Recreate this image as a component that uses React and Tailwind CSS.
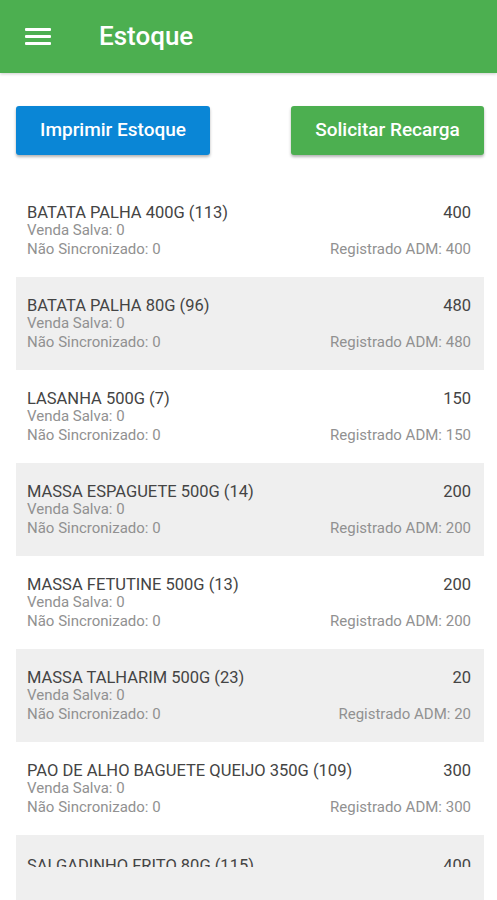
import React from 'react';

const items = [
    { name: 'BATATA PALHA 400G (113)', qty: 400, adm: 400 },
    { name: 'BATATA PALHA 80G (96)', qty: 480, adm: 480 },
    { name: 'LASANHA 500G (7)', qty: 150, adm: 150 },
    { name: 'MASSA ESPAGUETE 500G (14)', qty: 200, adm: 200 },
    { name: 'MASSA FETUTINE 500G (13)', qty: 200, adm: 200 },
    { name: 'MASSA TALHARIM 500G (23)', qty: 20, adm: 20 },
    { name: 'PAO DE ALHO BAGUETE QUEIJO 350G (109)', qty: 300, adm: 300 },
];

function StockRow({ item, shaded }) {
    return (
        <div className={`h-[93px] pl-[11px] pr-[13px] pt-[19px] ${shaded ? 'bg-[#efefef]' : 'bg-white'}`}>
            <div className="flex justify-between text-[16.5px] leading-[20px] text-[#444444]">
                <span>{item.name}</span>
                <span>{item.qty}</span>
            </div>
            <div className="text-[15px] leading-[18px] text-[#919191] -mt-[2px]">Venda Salva: 0</div>
            <div className="flex justify-between text-[15px] leading-[18px] text-[#919191] mt-px">
                <span>Não Sincronizado: 0</span>
                <span>Registrado ADM: {item.adm}</span>
            </div>
        </div>
    );
}

export default function App() {
    return (
        <div className="w-[497px] h-[900px] overflow-hidden bg-white flex flex-col" style={{ fontFamily: 'Roboto, "Noto Sans", sans-serif' }}>
            <header className="h-[73px] shrink-0 bg-[#4caf50] flex items-center shadow-[0_1px_3px_rgba(0,0,0,0.2)]">
                <div className="ml-[25px] w-[26px] flex flex-col gap-[4px]">
                    <span className="block h-[3px] bg-white rounded-[1px]"></span>
                    <span className="block h-[3px] bg-white rounded-[1px]"></span>
                    <span className="block h-[3px] bg-white rounded-[1px]"></span>
                </div>
                <h1 className="ml-[48px] text-white text-[26px] font-medium">Estoque</h1>
            </header>

            <div className="flex justify-between ml-[16px] w-[468px] mt-[33px]">
                <button className="w-[194px] h-[49px] rounded-[3px] bg-[#0a86d6] text-white text-[19px] font-medium shadow-[0_2px_3px_rgba(0,0,0,0.3)]">
                    Imprimir Estoque
                </button>
                <button className="w-[193px] h-[49px] rounded-[3px] bg-[#4caf50] text-white text-[19px] font-medium shadow-[0_2px_3px_rgba(0,0,0,0.3)]">
                    Solicitar Recarga
                </button>
            </div>

            <div className="mt-[29px] ml-[16px] w-[468px] flex-1 flex flex-col">
                {items.map((item, i) => (
                    <StockRow key={i} item={item} shaded={i % 2 === 1} />
                ))}
                <div className="flex-1 bg-[#efefef] pl-[11px] pr-[13px] pt-[21px]">
                    <div className="h-[11px] overflow-hidden">
                        <div className="flex justify-between text-[16.5px] leading-[20px] text-[#444444]">
                            <span>SALGADINHO FRITO 80G (115)</span>
                            <span>400</span>
                        </div>
                    </div>
                </div>
            </div>
        </div>
    );
}
